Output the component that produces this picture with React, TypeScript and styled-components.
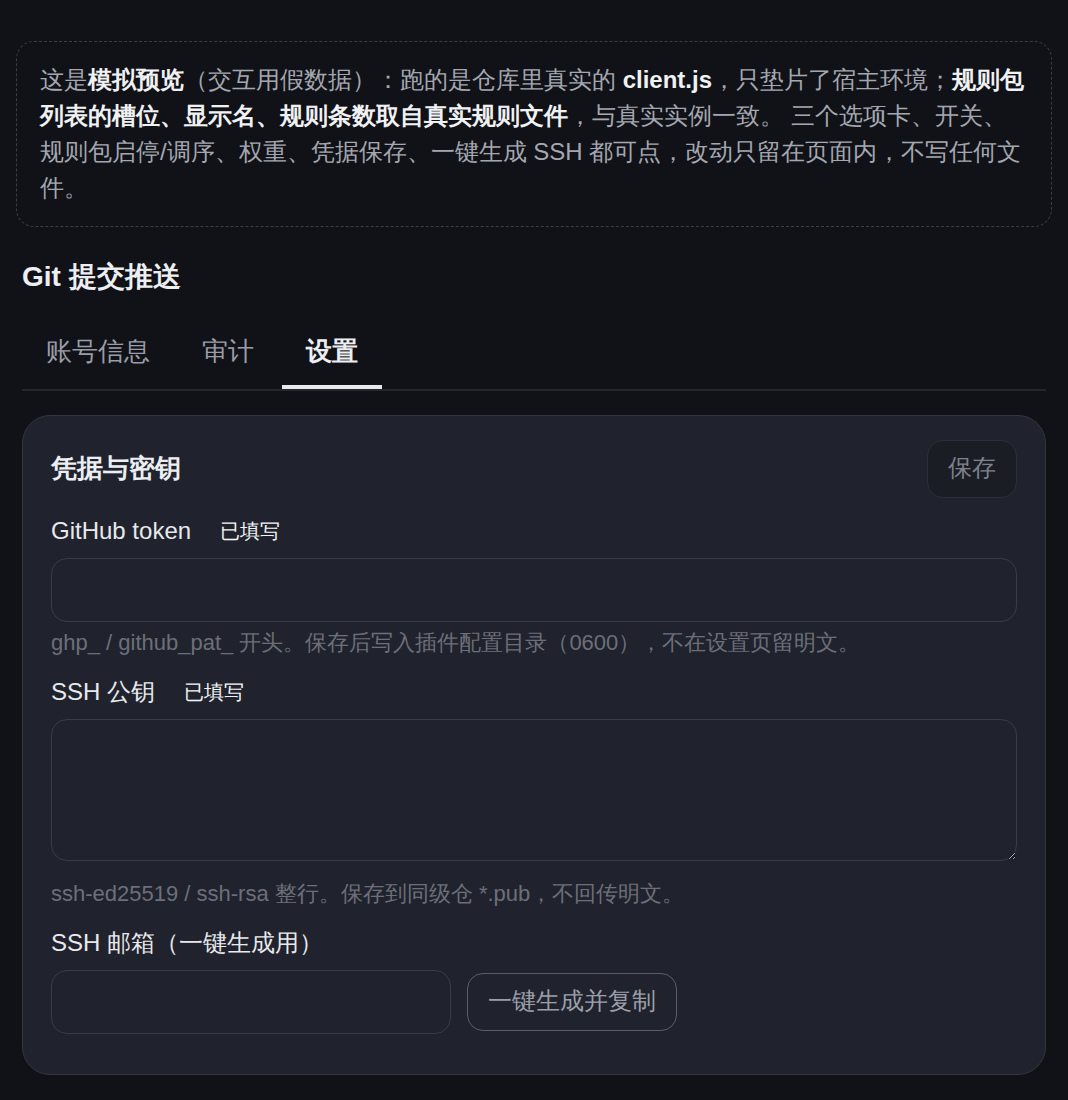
import React, { FunctionComponent, useState } from 'react'
import styled, { createGlobalStyle, css } from 'styled-components'

const GlobalStyle = createGlobalStyle`
  * {
    box-sizing: border-box;
  }

  body {
    margin: 0;
    background: #101217;
    color: #e8e9ec;
    font-family: 'Liberation Sans', sans-serif;
  }
`

const fieldBox = css`
  display: block;
  background: #20232d;
  border: 1px solid #393c46;
  border-radius: 16px;
  color: #e8e9ec;
  font-family: inherit;
  font-size: 22px;
  padding: 0 18px;
  outline: none;
`

const Page = styled.main`
  padding: 41px 22px 40px;
`

const Notice = styled.p`
  margin: 0 -6px;
  padding: 20px 23px;
  border: 1px dashed #3b3e46;
  border-radius: 18px;
  color: #a4a7b0;
  font-size: 24px;
  line-height: 36px;

  strong {
    color: #f0f1f3;
    font-weight: 700;
  }
`

const Heading = styled.h2`
  margin: 30px 0 0;
  font-size: 28px;
  line-height: 40px;
  font-weight: 700;
  color: #eceef1;
`

const TabBar = styled.nav`
  display: flex;
  gap: 4px;
  margin-top: 19px;
  border-bottom: 2px solid #24262c;
`

const Tab = styled.button<{ $active?: boolean }>`
  padding: 17px 24px 16px;
  background: none;
  border: none;
  border-bottom: 4px solid ${({ $active }) => ($active ? '#e8e9ec' : 'transparent')};
  color: ${({ $active }) => ($active ? '#eceef1' : '#9a9da6')};
  font-family: inherit;
  font-size: 26px;
  line-height: 36px;
  font-weight: ${({ $active }) => ($active ? 700 : 400)};
  cursor: pointer;
`

const Card = styled.section`
  margin-top: 24px;
  padding: 24px 28px 40px;
  background: #20232d;
  border: 1px solid #33363f;
  border-radius: 28px;
`

const CardHeader = styled.header`
  display: flex;
  align-items: center;
  justify-content: space-between;
  margin-bottom: 18px;
`

const CardTitle = styled.h3`
  margin: 0 0 2px;
  font-size: 26px;
  line-height: 36px;
  font-weight: 700;
  color: #eceef1;
`

const Button = styled.button<{ $outlined?: boolean }>`
  flex-shrink: 0;
  height: 58px;
  padding: 0 20px 2px;
  border-radius: 16px;
  background: ${({ $outlined }) => ($outlined ? '#20232d' : '#1b1d25')};
  border: 1px solid ${({ $outlined }) => ($outlined ? '#5a5d67' : '#2c2f38')};
  color: ${({ $outlined }) => ($outlined ? '#9c9fa8' : '#7f828c')};
  font-family: inherit;
  font-size: 24px;
  cursor: pointer;
`

const Field = styled.div`
  & + & {
    margin-top: 19px;
  }
`

const Label = styled.label`
  display: flex;
  align-items: center;
  gap: 29px;
  margin-bottom: 12px;
  font-size: 24px;
  line-height: 30px;
  color: #e8e9ec;
`

const Badge = styled.span`
  font-size: 20px;
  color: #f2f3f5;
`

const TextInput = styled.input<{ $width?: number }>`
  ${fieldBox}
  width: ${({ $width }) => ($width ? `${$width}px` : '100%')};
  height: 64px;
`

const TextArea = styled.textarea`
  ${fieldBox}
  width: 100%;
  height: 142px;
  padding: 14px 18px;
  margin-bottom: 18px;
  color-scheme: dark;
  resize: vertical;
`

const Hint = styled.p`
  margin: 6px 0 0;
  font-size: 22px;
  line-height: 30px;
  color: #6c6f79;
`

const InlineRow = styled.div`
  display: flex;
  align-items: center;
  gap: 16px;
`

const tabs = ['账号信息', '审计', '设置']

const App: FunctionComponent = () => {
  const [active, setActive] = useState(2)

  return (
    <Page>
      <GlobalStyle />
      <Notice>
        这是<strong>模拟预览</strong>（交互用假数据）：跑的是仓库里真实的 <strong>client.js</strong>
        ，只垫片了宿主环境；<strong>规则包列表的槽位、显示名、规则条数取自真实规则文件</strong>
        ，与真实实例一致。 三个选项卡、开关、规则包启停/调序、权重、凭据保存、一键生成 SSH
        都可点，改动只留在页面内，不写任何文件。
      </Notice>

      <Heading>Git 提交推送</Heading>

      <TabBar>
        {tabs.map((name, i) => (
          <Tab key={name} $active={i === active} onClick={() => setActive(i)}>
            {name}
          </Tab>
        ))}
      </TabBar>

      <Card>
        <CardHeader>
          <CardTitle>凭据与密钥</CardTitle>
          <Button>保存</Button>
        </CardHeader>

        <Field>
          <Label>
            GitHub token <Badge>已填写</Badge>
          </Label>
          <TextInput type="password" />
          <Hint>ghp_ / github_pat_ 开头。保存后写入插件配置目录（0600），不在设置页留明文。</Hint>
        </Field>

        <Field>
          <Label>
            SSH 公钥 <Badge>已填写</Badge>
          </Label>
          <TextArea />
          <Hint>ssh-ed25519 / ssh-rsa 整行。保存到同级仓 *.pub，不回传明文。</Hint>
        </Field>

        <Field>
          <Label>SSH 邮箱（一键生成用）</Label>
          <InlineRow>
            <TextInput $width={400} />
            <Button $outlined>一键生成并复制</Button>
          </InlineRow>
        </Field>
      </Card>
    </Page>
  )
}

export default App
